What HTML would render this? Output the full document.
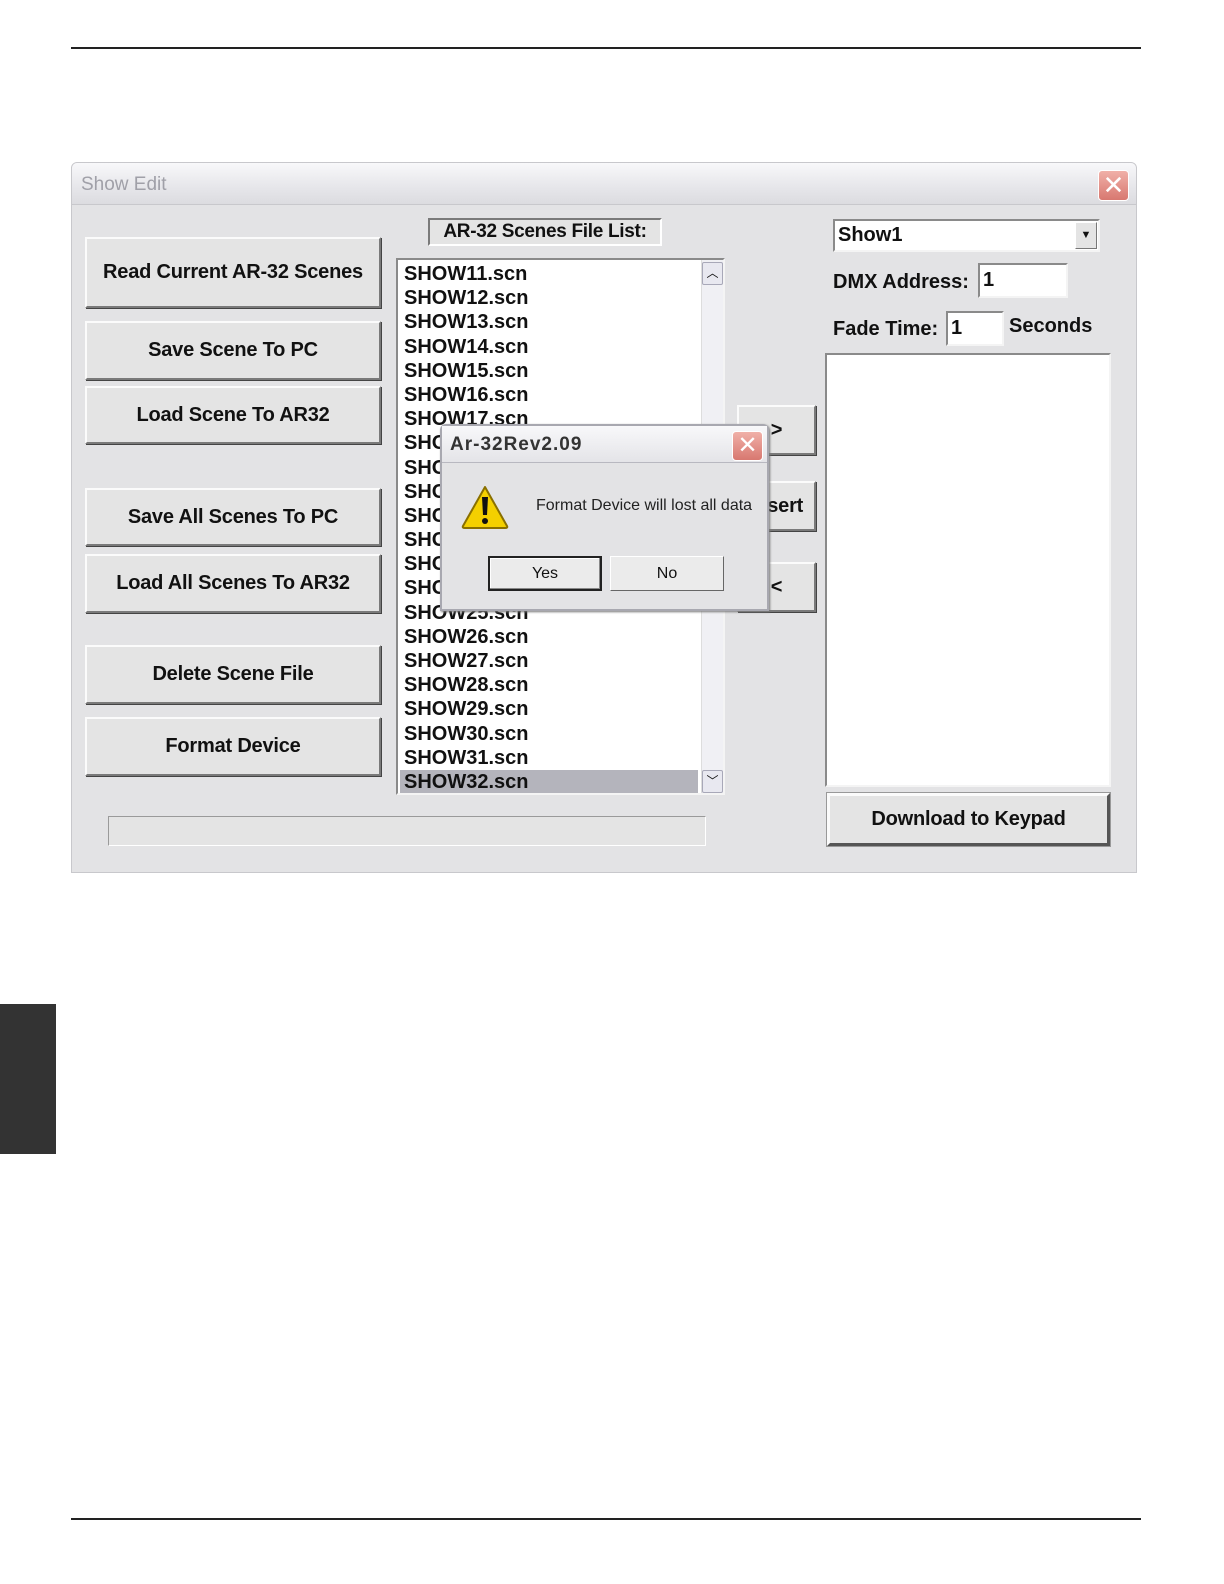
<!DOCTYPE html>
<html><head><meta charset="utf-8">
<style>
*{box-sizing:border-box;margin:0;padding:0}
html{width:1224px;height:1584px;overflow:hidden}
body{width:1224px;height:1584px;background:#fff;position:relative;overflow:hidden;font-family:"Liberation Sans",sans-serif;color:#111}
.a{position:absolute}
.btn{position:absolute;background:#e4e4e4;border:2px solid;border-color:#fbfbfb #7a7a7a #7a7a7a #fbfbfb;box-shadow:1px 1px 0 #444;display:flex;align-items:center;justify-content:center;font-weight:bold;font-size:20px;letter-spacing:-0.2px;white-space:nowrap}
.sunk{position:absolute;background:#fff;border:2px solid;border-color:#8a8a8a #f4f4f4 #f4f4f4 #8a8a8a}
.li{height:24.2px;line-height:24.2px;font-size:20px;font-weight:bold;padding-left:4px;white-space:nowrap}
</style></head><body>
<div class="a" style="left:71px;top:47px;width:1070px;height:2px;background:#222"></div>
<div class="a" style="left:71px;top:1518px;width:1070px;height:2px;background:#222"></div>
<div class="a" style="left:0;top:1004px;width:56px;height:150px;background:#333"></div>

<div class="a" style="left:71px;top:162px;width:1066px;height:711px;background:#e3e3e5;border:1px solid #c8c8cc;border-radius:6px 6px 0 0;overflow:hidden">
 <div class="a" style="left:0;top:0;width:100%;height:42px;background:linear-gradient(#f8f8fa,#e6e6ea 60%,#dcdce0);border-bottom:1px solid #c8c8cc"></div>
 <div class="a" style="left:9px;top:11px;font-size:19px;color:#a0a0a8">Show Edit</div>
 <div class="a" style="left:1026px;top:7px;width:31px;height:31px;border-radius:4px;background:linear-gradient(#f0b0a8,#d87870);border:1px solid #fff;color:#fff;font-size:26px;line-height:28px;text-align:center">✕</div>
</div>

<div class="btn" style="left:85px;top:237px;width:296px;height:71px">Read Current AR-32 Scenes</div>
<div class="btn" style="left:85px;top:321px;width:296px;height:59px">Save Scene To PC</div>
<div class="btn" style="left:85px;top:386px;width:296px;height:58px">Load Scene To AR32</div>
<div class="btn" style="left:85px;top:488px;width:296px;height:58px">Save All Scenes To PC</div>
<div class="btn" style="left:85px;top:554px;width:296px;height:59px">Load All Scenes To AR32</div>
<div class="btn" style="left:85px;top:645px;width:296px;height:59px">Delete Scene File</div>
<div class="btn" style="left:85px;top:717px;width:296px;height:59px">Format Device</div>

<div class="a" style="left:428px;top:218px;width:234px;height:28px;background:#e4e4e4;border:2px solid;border-color:#7a7a7a #fff #fff #7a7a7a;font-size:19px;letter-spacing:-0.3px;white-space:nowrap;font-weight:bold;text-align:center;line-height:24px">AR-32 Scenes File List:</div>

<div class="sunk" style="left:396px;top:258px;width:329px;height:537px;overflow:hidden">
 <div class="a" style="left:2px;top:2px;width:300px">
  <div class="li">SHOW11.scn</div><div class="li">SHOW12.scn</div><div class="li">SHOW13.scn</div><div class="li">SHOW14.scn</div><div class="li">SHOW15.scn</div><div class="li">SHOW16.scn</div><div class="li">SHOW17.scn</div><div class="li">SHOW18.scn</div><div class="li">SHOW19.scn</div><div class="li">SHOW20.scn</div><div class="li">SHOW21.scn</div><div class="li">SHOW22.scn</div><div class="li">SHOW23.scn</div><div class="li">SHOW24.scn</div><div class="li">SHOW25.scn</div><div class="li">SHOW26.scn</div><div class="li">SHOW27.scn</div><div class="li">SHOW28.scn</div><div class="li">SHOW29.scn</div><div class="li">SHOW30.scn</div><div class="li">SHOW31.scn</div><div class="li" style="background:#b4b4bc;width:298px">SHOW32.scn</div>
 </div>
 <div class="a" style="left:303px;top:0;width:22px;height:533px;background:#f0f0f4;border-left:1px solid #ddd"></div>
 <div class="a" style="left:304px;top:2px;width:21px;height:23px;background:#e8e8f0;border:1px solid #a8a8b8;border-radius:2px;font-size:12px;text-align:center;line-height:21px">︿</div>
 <div class="a" style="left:304px;top:510px;width:21px;height:23px;background:#e8e8f0;border:1px solid #a8a8b8;border-radius:2px;font-size:12px;text-align:center;line-height:21px">﹀</div>
</div>

<div class="btn" style="left:737px;top:405px;width:79px;height:50px">&gt;</div>
<div class="btn" style="left:737px;top:481px;width:79px;height:50px">Insert</div>
<div class="btn" style="left:737px;top:562px;width:79px;height:50px">&lt;</div>

<div class="sunk" style="left:833px;top:219px;width:267px;height:33px;font-size:20px;font-weight:bold;padding-left:3px;line-height:28px">Show1
 <div class="a" style="right:1px;top:1px;width:22px;height:27px;background:#e4e4e4;border:1px solid;border-color:#fff #777 #777 #fff;font-size:11px;text-align:center;line-height:25px">▼</div>
</div>
<div class="a" style="left:833px;top:271px;font-size:20px;font-weight:bold;white-space:nowrap">DMX Address:</div>
<div class="sunk" style="left:978px;top:263px;width:90px;height:35px;font-size:20px;font-weight:bold;padding-left:3px;line-height:30px">1</div>
<div class="a" style="left:833px;top:318px;font-size:20px;font-weight:bold;white-space:nowrap">Fade Time:</div>
<div class="sunk" style="left:946px;top:311px;width:58px;height:35px;font-size:20px;font-weight:bold;padding-left:3px;line-height:30px">1</div>
<div class="a" style="left:1009px;top:315px;font-size:20px;font-weight:bold">Seconds</div>
<div class="sunk" style="left:825px;top:353px;width:286px;height:434px"></div>
<div class="btn" style="left:827px;top:793px;width:283px;height:53px;border:3px solid;border-color:#fbfbfb #555 #555 #fbfbfb;box-shadow:0 0 0 1px #999">Download to Keypad</div>
<div class="a" style="left:108px;top:816px;width:598px;height:30px;border:1px solid;border-color:#9a9a9a #fff #fff #9a9a9a;background:#e4e4e4"></div>

<div class="a" style="left:440px;top:424px;width:329px;height:187px;background:#e3e3e5;border:2px solid #a8a8b0;border-radius:6px 6px 0 0;box-shadow:1px 1px 2px #777">
 <div class="a" style="left:0;top:0;width:100%;height:37px;background:linear-gradient(#f8f8fa,#e4e4e8);border-bottom:1px solid #b8b8c0"></div>
 <div class="a" style="left:8px;top:8px;font-size:19px;font-weight:bold;letter-spacing:1px;color:#333">Ar-32Rev2.09</div>
 <div class="a" style="left:290px;top:5px;width:31px;height:30px;border-radius:4px;background:linear-gradient(#f0b0a8,#d87870);border:1px solid #fff;color:#fff;font-size:24px;line-height:28px;text-align:center">✕</div>
 <svg class="a" style="left:18px;top:58px" width="50" height="46" viewBox="0 0 50 46"><path d="M25 3 L47 42 Q48 44 45 44 L5 44 Q2 44 3 42 Z" fill="#f4d000" stroke="#8a7000" stroke-width="2" stroke-linejoin="round"/><path d="M22 13 L28 13 L27 31 L23 31 Z" fill="#111"/><circle cx="25" cy="37" r="3" fill="#111"/></svg>
 <div class="a" style="left:94px;top:71px;font-size:16px;color:#222;white-space:nowrap">Format Device will lost all data</div>
 <div class="a" style="left:46px;top:130px;width:114px;height:35px;background:#ebebeb;border:2px solid #222;font-size:16px;text-align:center;line-height:31px;box-shadow:inset -1px -1px 0 #888,inset 1px 1px 0 #fff">Yes</div>
 <div class="a" style="left:168px;top:130px;width:114px;height:35px;background:#ebebeb;border:1px solid;border-color:#fff #666 #666 #fff;font-size:16px;text-align:center;line-height:33px">No</div>
</div>
</body></html>
